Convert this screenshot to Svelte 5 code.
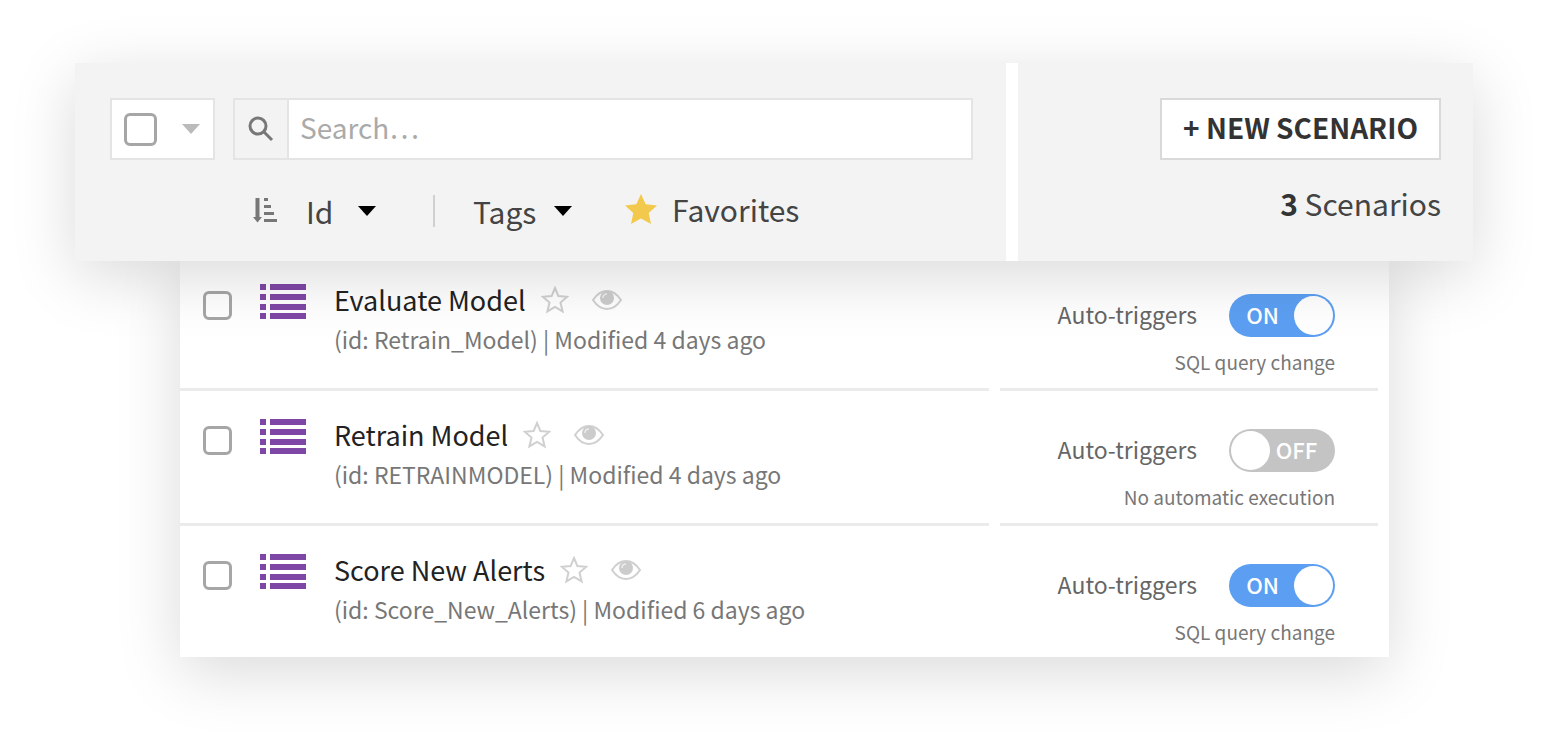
<script>
    let search = "";
    let sortBy = "Id";
    let tag = "Tags";
    let allSelected = false;

    let scenarios = [
        { id: "Retrain_Model", name: "Evaluate Model", modified: "4 days ago", active: true, trigger: "SQL query change", selected: false },
        { id: "RETRAINMODEL", name: "Retrain Model", modified: "4 days ago", active: false, trigger: "No automatic execution", selected: false },
        { id: "Score_New_Alerts", name: "Score New Alerts", modified: "6 days ago", active: true, trigger: "SQL query change", selected: false },
    ];

    function toggleAll() {
        scenarios = scenarios.map((s) => ({ ...s, selected: allSelected }));
    }
</script>

<main class="page">
    <header class="toolbar">
        <div class="pane">
            <div class="row">
                <div class="select-all">
                    <input type="checkbox" class="tick large" aria-label="Select all" bind:checked={allSelected} on:change={toggleAll} />
                    <button class="plain" aria-label="Selection options">
                        <svg class="caret muted" viewBox="0 0 18 10"><path d="M0 0h18l-9 10z" /></svg>
                    </button>
                </div>
                <div class="search">
                    <label for="search" aria-label="Search">
                        <svg class="glass" viewBox="0 0 26 26"><circle cx="10" cy="10" r="8" /><path d="M15.500 15.500l8.500 8.500" /></svg>
                    </label>
                    <input id="search" type="text" placeholder="Search…" bind:value={search} />
                </div>
            </div>
            <div class="filters">
                <button class="plain" aria-label="Sort direction">
                    <svg class="sort" viewBox="0 0 26 26">
                        <path d="M3.500 0h4v19H10l-4.500 5.500L1 19h2.500z" />
                        <path d="M12 0h4v3h-4zM12 7h7v3h-7zM12 14h10v3H12zM12 21h13v3H12z" />
                    </svg>
                </button>
                <label class="dropdown sort-by">
                    <select aria-label="Sort by" bind:value={sortBy}><option>Id</option></select>
                    <svg class="caret" viewBox="0 0 18 10"><path d="M0 0h18l-9 10z" /></svg>
                </label>
                <span class="divider"></span>
                <label class="dropdown">
                    <select aria-label="Tags" bind:value={tag}><option>Tags</option></select>
                    <svg class="caret" viewBox="0 0 18 10"><path d="M0 0h18l-9 10z" /></svg>
                </label>
                <button class="plain favorites">
                    <svg class="gold" viewBox="0 0 32 30"><path d="M16 0l4.700 10.200 11.300 1.300-8.300 7.600 2.300 10.900L16 24.600 6 30l2.300-10.900L0 11.500l11.300-1.300z" /></svg>
                    <span>Favorites</span>
                </button>
            </div>
        </div>
        <div class="pane actions">
            <button class="new">+ NEW SCENARIO</button>
            <p class="count"><strong>{scenarios.length}</strong> Scenarios</p>
        </div>
    </header>

    <ul class="list">
        {#each scenarios as scenario (scenario.id)}
            <li>
                <div class="cell info">
                    <input type="checkbox" class="tick" aria-label={scenario.name} bind:checked={scenario.selected} />
                    <svg class="steps" viewBox="0 0 46 36">
                        <path d="M0 0h6v6H0zM10 0h36v6H10zM0 10h6v6H0zM10 10h36v6H10zM0 20h6v6H0zM10 20h36v6H10zM0 29h6v6H0zM10 29h36v6H10z" />
                    </svg>
                    <div>
                        <div class="title">
                            <h2>{scenario.name}</h2>
                            <button class="plain" aria-label="Add to favorites">
                                <svg class="star" viewBox="0 0 28 28"><path d="M14 2l3.400 8.100 8.800.700-6.700 5.700 2.100 8.900L14 20.900l-7.600 4.500 2.100-8.900-6.700-5.700 8.800-.700z" /></svg>
                            </button>
                            <button class="plain" aria-label="Watch">
                                <svg class="eye" viewBox="0 0 30 20">
                                    <path class="lid" d="M1 10C5 4 10 1 15 1s10 3 14 9c-4 6-9 9-14 9S5 16 1 10z" />
                                    <circle cx="15" cy="8" r="7" />
                                    <path class="glint" d="M11 8q0-4 4-4" />
                                </svg>
                            </button>
                        </div>
                        <p class="meta">(id: {scenario.id}) | Modified {scenario.modified}</p>
                    </div>
                </div>
                <div class="cell triggers">
                    <label class="switch">
                        <span>Auto-triggers</span>
                        <input type="checkbox" role="switch" bind:checked={scenario.active} />
                        <span class="track" class:on={scenario.active}>
                            <span class="state">{scenario.active ? "ON" : "OFF"}</span>
                            <span class="knob"></span>
                        </span>
                    </label>
                    <p class="note">{scenario.trigger}</p>
                </div>
            </li>
        {/each}
    </ul>
</main>

<style>
    :global(body) {
        margin: 0;
        background: #fff;
    }

    .page {
        padding: 63px 75px 80px;
        font-family: "Noto Sans CJK SC", "Open Sans", sans-serif;
        font-size: 30px;
        line-height: 36px;
        color: #444;
    }

    .page * {
        box-sizing: border-box;
    }

    p, h2, ul {
        margin: 0;
        padding: 0;
    }

    input, select, button {
        margin: 0;
        font: inherit;
        color: inherit;
    }

    svg {
        display: block;
        flex: none;
    }

    .plain {
        display: flex;
        align-items: center;
        padding: 0;
        border: 0;
        background: none;
        cursor: pointer;
    }

    .toolbar {
        position: relative;
        z-index: 1;
        display: grid;
        grid-template-columns: 1fr 455px;
        gap: 12px;
        background: #fff;
        box-shadow: 0 15px 60px rgba(0, 0, 0, 0.15);
    }

    .pane {
        padding: 35px 33px 32px 35px;
        background: #f3f3f3;
    }

    .row {
        display: flex;
        gap: 18px;
    }

    .select-all {
        display: flex;
        align-items: center;
        justify-content: space-between;
        width: 105px;
        height: 62px;
        padding: 0 13px 0 12px;
        border: 2px solid #e4e4e4;
        background: #fff;
    }

    .tick {
        appearance: none;
        flex: none;
        width: 29px;
        height: 29px;
        border: 3px solid #a6a6a6;
        border-radius: 6px;
        background: #fff;
    }

    .tick.large {
        width: 33px;
        height: 33px;
    }

    .tick:checked {
        background: #5c9ff2;
    }

    .caret {
        width: 18px;
        height: 10px;
        fill: #000;
        pointer-events: none;
    }

    .caret.muted {
        fill: #bbb;
    }

    .search {
        display: flex;
        flex: 1;
        height: 62px;
        border: 2px solid #e4e4e4;
        background: #fff;
    }

    .search label {
        display: grid;
        place-items: center;
        width: 54px;
        border-right: 2px solid #e4e4e4;
        background: #f3f3f3;
    }

    .search input {
        flex: 1;
        min-width: 0;
        padding: 0 11px 4px;
        border: 0;
        outline: 0;
        background: none;
        font-size: 28px;
    }

    .search input::placeholder {
        color: #aaa;
        opacity: 1;
    }

    .glass {
        width: 26px;
        height: 26px;
        fill: none;
        stroke: #777;
        stroke-width: 3;
    }

    .filters {
        display: flex;
        align-items: center;
        height: 36px;
        margin-top: 33px;
        padding-left: 142px;
    }

    .sort {
        width: 26px;
        height: 26px;
        fill: #777;
    }

    .dropdown {
        display: flex;
        align-items: center;
        gap: 17px;
    }

    .sort-by {
        margin-left: 28px;
        gap: 24px;
    }

    .dropdown select {
        appearance: none;
        height: 48px;
        padding: 0;
        border: 0;
        background: none;
        line-height: 48px;
    }

    .divider {
        width: 2px;
        height: 32px;
        margin: 0 38px 0 57px;
        background: #d0d0d0;
    }

    .favorites {
        gap: 15px;
        margin-left: 53px;
    }

    .favorites span,
    .switch > span:first-child {
        padding-bottom: 4px;
    }

    .gold {
        width: 32px;
        height: 30px;
        margin-bottom: 4px;
        fill: #f2c94c;
    }

    .actions {
        display: flex;
        flex-direction: column;
        align-items: flex-end;
        padding-right: 32px;
    }

    .new {
        height: 62px;
        padding: 0 21px 4px;
        border: 2px solid #d9d9d9;
        background: #fff;
        color: #333;
        font-size: 28px;
        font-weight: 700;
        cursor: pointer;
    }

    .count {
        margin-top: 25px;
    }

    .count strong {
        color: #333;
    }

    .list {
        margin: -5px 84px 0 105px;
        padding-right: 11px;
        list-style: none;
        background: #fff;
        box-shadow: 0 15px 60px rgba(0, 0, 0, 0.15);
    }

    li {
        display: grid;
        grid-template-columns: 1fr 378px;
        gap: 11px;
    }

    .cell {
        padding: 26px 43px 12px 23px;
        border-bottom: 3px solid #ebebeb;
    }

    li:last-child .cell {
        padding-bottom: 11px;
        border-bottom: 0;
    }

    .info {
        display: flex;
        align-items: flex-start;
    }

    .info .tick {
        margin: 9px 28px 0 0;
    }

    .steps {
        width: 46px;
        height: 36px;
        margin: 2px 28px 0 0;
        fill: #7f47a5;
    }

    .title {
        display: flex;
        align-items: center;
    }

    h2 {
        color: #222;
        font-size: 27px;
        font-weight: 400;
    }

    .star {
        width: 28px;
        height: 28px;
        margin: 0 23px 0 15px;
        fill: none;
        stroke: #d0d0d0;
        stroke-width: 2;
    }

    .eye {
        width: 30px;
        height: 20px;
        fill: #ccc;
    }

    .lid {
        fill: none;
        stroke: #d0d0d0;
        stroke-width: 2;
    }

    .glint {
        fill: none;
        stroke: #eee;
        stroke-width: 1.5;
    }

    .meta {
        margin-top: 3px;
        color: #777;
        font-size: 23px;
    }

    .triggers {
        padding-top: 38px;
        text-align: right;
    }

    .switch {
        position: relative;
        display: flex;
        align-items: center;
        justify-content: flex-end;
        gap: 32px;
        color: #666;
        font-size: 23px;
        cursor: pointer;
    }

    .switch input {
        position: absolute;
        opacity: 0;
    }

    .track {
        display: flex;
        flex-direction: row-reverse;
        align-items: center;
        width: 106px;
        height: 43px;
        padding: 2px 12px 2px 2px;
        border-radius: 22px;
        background: #c4c4c4;
    }

    .track.on {
        flex-direction: row;
        padding: 2px;
        background: #5c9ff2;
    }

    .state {
        flex: 1;
        padding-bottom: 4px;
        color: #fff;
        font-size: 22px;
        font-weight: 500;
        text-align: center;
    }

    .knob {
        flex: none;
        width: 39px;
        height: 39px;
        border-radius: 50%;
        background: #fff;
    }

    .note {
        margin-top: 11px;
        color: #777;
        font-size: 19px;
        line-height: 28px;
    }
</style>
